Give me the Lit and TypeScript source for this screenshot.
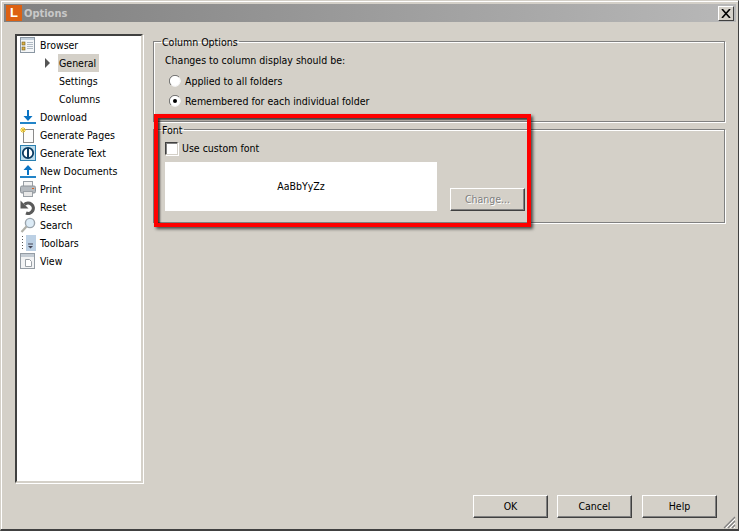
import { LitElement, html, css, svg } from "lit";
import { customElement } from "lit/decorators.js";

const S = (c: unknown) => html`<svg class="ico" width="16" height="16" viewBox="0 0 16 16">${c}</svg>`;
const icons: Record<string, unknown> = {
  browser: S(svg`<rect x=".5" y=".5" width="14" height="15" fill="#f4f6f8" stroke="#8a96a2"/><rect x="1" y="1" width="13" height="2" fill="#c3d0dc"/><rect x="2" y="5" width="3" height="3" fill="#e0b040" stroke="#6a5a20" stroke-width=".6"/><rect x="2" y="10" width="3" height="3" fill="#e0b040" stroke="#6a5a20" stroke-width=".6"/><path d="M7 5.500h6M7 7.500h6M7 9.500h6M7 11.500h6" stroke="#b0bac4"/>`),
  download: S(svg`<path d="M8 1v7" stroke="#0a74c4" stroke-width="2"/><path d="M3.500 7h9L8 12z" fill="#0a74c4"/><rect x="0" y="13" width="16" height="2" fill="#2284c8"/>`),
  pages: S(svg`<rect x="3.500" y="2.500" width="10" height="13" fill="#fcfcfc" stroke="#8a8a8a"/><path d="M3 0v6M0 3h6M1 1l4 4M5 1l-4 4" stroke="#e8c020"/>`),
  text: S(svg`<rect x=".5" y=".5" width="15" height="15" fill="#bcdcec" stroke="#2a80b0"/><circle cx="8" cy="8" r="5.200" fill="#fff" stroke="#0a3a60" stroke-width="1.800"/><path d="M8 3v10" stroke="#0a3a60" stroke-width="2"/>`),
  upload: S(svg`<path d="M8 12V6" stroke="#0a74c4" stroke-width="2"/><path d="M3.500 7h9L8 2z" fill="#0a74c4"/><rect x="0" y="13" width="16" height="2" fill="#2284c8"/>`),
  print: S(svg`<rect x="3.500" y=".5" width="9" height="5" fill="#f2f2f2" stroke="#9aa0a6"/><rect x=".5" y="5" width="15" height="7" rx="1.500" fill="#b4b9be" stroke="#8c9298"/><rect x="12" y="7" width="2" height="1" fill="#d86020"/><rect x="3.500" y="10.500" width="9" height="5" fill="#e8e8e8" stroke="#9aa0a6"/>`),
  reset: S(svg`<path d="M4.500 5.500a5.200 5.200 0 1 1 1.500 8.500" fill="none" stroke="#5a5a5a" stroke-width="3.200"/><path d="M0.500 1.500v8h8z" fill="#5a5a5a"/>`),
  search: S(svg`<circle cx="10" cy="6" r="4.600" fill="#dcebf6" stroke="#9aa4ac" stroke-width="1.400"/><path d="M6.500 9.500L1.500 15" stroke="#b0b0a8" stroke-width="2.200"/>`),
  toolbars: S(svg`<path d="M2.500 1v1M2.500 4v1M2.500 7v1M2.500 10v1M2.500 13v1" stroke="#555"/><rect x="6" y="0" width="10" height="16" fill="#bcd0e4"/><path d="M8 9h5" stroke="#445" /><path d="M8 11h5l-2.500 2.500z" fill="#445"/>`),
  view: S(svg`<rect x=".5" y=".5" width="14" height="15" fill="#f2f3f4" stroke="#949ca4"/><rect x="1" y="1" width="13" height="3" fill="#c4ccd4"/><path d="M5.500 6.500h4l2 2v5h-6z" fill="#fff" stroke="#9aa0a6"/>`),
};

const items = [
  ["browser", "Browser"],
  ["", "General", "sel"],
  ["", "Settings"],
  ["", "Columns"],
  ["download", "Download"],
  ["pages", "Generate Pages"],
  ["text", "Generate Text"],
  ["upload", "New Documents"],
  ["print", "Print"],
  ["reset", "Reset"],
  ["search", "Search"],
  ["toolbars", "Toolbars"],
  ["view", "View"],
];

@customElement("app-root")
export class AppRoot extends LitElement {
  static styles = css`
    :host {
      display: block;
      position: relative;
      width: 739px;
      height: 531px;
      overflow: hidden;
      font-family: "DejaVu Sans Condensed", "DejaVu Sans", sans-serif;
      font-stretch: condensed;
      font-size: 10.500px;
      color: #000;
    }
    * { box-sizing: border-box; }
    .win {
      width: 739px;
      height: 531px;
      background: #d4d0c8;
      border-top: 1px solid #d4d0c8;
      border-left: 1px solid #d4d0c8;
      border-right: 1px solid #404040;
      border-bottom: 2px solid #404040;
      box-shadow: inset 1px 1px 0 #fff;
      padding: 3px 2px 0 3px;
      display: flex;
      flex-direction: column;
    }
    .title {
      height: 18px;
      flex: none;
      display: flex;
      align-items: center;
      background: linear-gradient(90deg, #808080, #b8b8b8);
      padding: 0 2px 0 2px;
    }
    .logo {
      width: 16px;
      height: 16px;
      background: #dd6112;
      color: #fff;
      font: bold 13px/16px "Liberation Sans", sans-serif;
      text-align: center;
      flex: none;
    }
    .title b {
      margin-left: 2px;
      color: #c8c8c8;
      font-weight: bold;
      font-size: 11px;
      flex: 1;
    }
    .close {
      width: 16px;
      height: 15px;
      background: #d4d0c8;
      border: 1px solid;
      border-color: #fff #404040 #404040 #fff;
      display: flex;
      align-items: center;
      justify-content: center;
    }
    .body {
      flex: 1;
      min-height: 0;
      display: flex;
      padding: 12px 0 0 11px;
      position: relative;
    }
    .tree {
      width: 128px;
      height: 449px;
      flex: none;
      background: #fff;
      border: 2px solid;
      border-color: #404040 #d4d0c8 #d4d0c8 #404040;
      box-shadow: 1px 1px 0 #fff;
    }
    .row {
      height: 18px;
      display: flex;
      align-items: center;
      padding-left: 3px;
      gap: 4px;
      white-space: nowrap;
    }
    .ico { flex: none; display: block; }
    .child { padding-left: 28px; gap: 0; }
    .arrow {
      width: 0;
      height: 0;
      border-left: 5px solid #555;
      border-top: 5px solid transparent;
      border-bottom: 5px solid transparent;
      margin-right: 8px;
      flex: none;
    }
    .noarrow { width: 13px; flex: none; }
    .lab { padding: 0 2px 0 1px; line-height: 18px; height: 18px; min-width: 41px; }
    .sel { background: #d4d0c8; }
    .main {
      flex: 1;
      margin-left: 10px;
      padding-top: 2px;
      margin-right: 11px;
      display: flex;
      flex-direction: column;
      gap: 2px;
    }
    fieldset {
      margin: 0;
      padding: 0 0 0 11px;
      border: 1px solid #808080;
      box-shadow: 1px 1px 0 #fff, inset 1px 1px 0 #fff;
      min-width: 0;
    }
    legend {
      padding: 0 1px;
      margin-left: -4px;
      line-height: 12px;
      height: 10px;
    }
    .col { height: 86px; }
    .font { height: 99px; }
    .lead { height: 18px; line-height: 18px; margin-top: 5px; }
    .radio {
      display: flex;
      align-items: center;
      height: 20px;
      padding-left: 4px;
      gap: 4px;
    }
    .radio svg { flex: none; }
    .first { margin-top: 2px; }
    .check {
      display: flex;
      align-items: center;
      gap: 4px;
      height: 14px;
      margin-top: 7px;
    }
    .box {
      width: 13px;
      height: 13px;
      background: #fff;
      border: 1px solid;
      border-color: #404040 #d4d0c8 #d4d0c8 #404040;
      box-shadow: inset 1px 1px 0 #808080, 1px 1px 0 #fff;
    }
    .pv-row {
      display: flex;
      align-items: flex-end;
      gap: 13px;
      margin-top: 7px;
    }
    .pv {
      width: 272px;
      height: 49px;
      padding-bottom: 2px;
      background: #fff;
      display: flex;
      align-items: center;
      justify-content: center;
    }
    button {
      font: inherit;
      width: 75px;
      height: 23px;
      padding: 0 0 1px;
      background: #d4d0c8;
      border: 1px solid;
      border-color: #fff #404040 #404040 #fff;
      box-shadow: inset -1px -1px 0 #808080;
      color: #000;
    }
    button[disabled] { color: #808080; text-shadow: 1px 1px 0 #fff; }
    .foot {
      position: absolute;
      right: 19px;
      bottom: 11px;
      display: flex;
      gap: 9px;
    }
    .foot button:last-child { margin-left: 1px; }
    .grip {
      position: absolute;
      right: 0;
      bottom: 0;
    }
    .mark {
      position: absolute;
      left: 154px;
      top: 114px;
      width: 377px;
      height: 113px;
      border: 4px solid #fe0000;
      box-shadow: 2px 2px 3px rgba(0,0,0,.65), inset 2px 2px 2px rgba(0,0,0,.7);
      pointer-events: none;
    }
  `;

  radio(on: boolean) {
    return html`<svg width="12" height="12" viewBox="0 0 12 12">
      <circle cx="6" cy="6" r="5.500" fill="#fff"/>
      <path d="M10 2A5.500 5.500 0 0 0 2 10" fill="none" stroke="#707070"/>
      <path d="M10.500 3A5.500 5.500 0 0 1 3 10.500" fill="none" stroke="#f4f4f4"/>
      ${on ? svg`<circle cx="6" cy="6" r="2" fill="#000"/>` : ""}
    </svg>`;
  }

  render() {
    return html`
      <div class="win">
        <div class="title">
          <div class="logo">L</div>
          <b>Options</b>
          <div class="close">
            <svg width="10" height="9" viewBox="0 0 10 9"><path d="M1 0l8 9M9 0L1 9" stroke="#000" stroke-width="1.600"/></svg>
          </div>
        </div>
        <div class="body">
          <div class="tree">
            ${items.map(([ic, t, sel], i) =>
              ic
                ? html`<div class="row">${icons[ic]}<span>${t}</span></div>`
                : html`<div class="row child">
                    ${i === 1 ? html`<span class="arrow"></span>` : html`<span class="noarrow"></span>`}
                    <span class="lab ${sel ? "sel" : ""}">${t}</span>
                  </div>`
            )}
          </div>
          <div class="main">
            <fieldset class="col">
              <legend>Column Options</legend>
              <div class="lead">Changes to column display should be:</div>
              <div class="radio first">${this.radio(false)}<span>Applied to all folders</span></div>
              <div class="radio">${this.radio(true)}<span>Remembered for each individual folder</span></div>
            </fieldset>
            <fieldset class="font">
              <legend>Font</legend>
              <div class="check"><span class="box"></span><span>Use custom font</span></div>
              <div class="pv-row">
                <div class="pv">AaBbYyZz</div>
                <button disabled>Change...</button>
              </div>
            </fieldset>
          </div>
          <div class="foot">
            <button>OK</button>
            <button>Cancel</button>
            <button>Help</button>
          </div>
          <svg class="grip" width="13" height="13" viewBox="0 0 13 13">
            <path d="M12 1L1 12M12 5L5 12M12 9L9 12" stroke="#808080" stroke-width="1.200"/>
            <path d="M12 3L3 12M12 7L7 12M12 11L11 12" stroke="#fff"/>
          </svg>
        </div>
      </div>
      <div class="mark"></div>
    `;
  }
}
